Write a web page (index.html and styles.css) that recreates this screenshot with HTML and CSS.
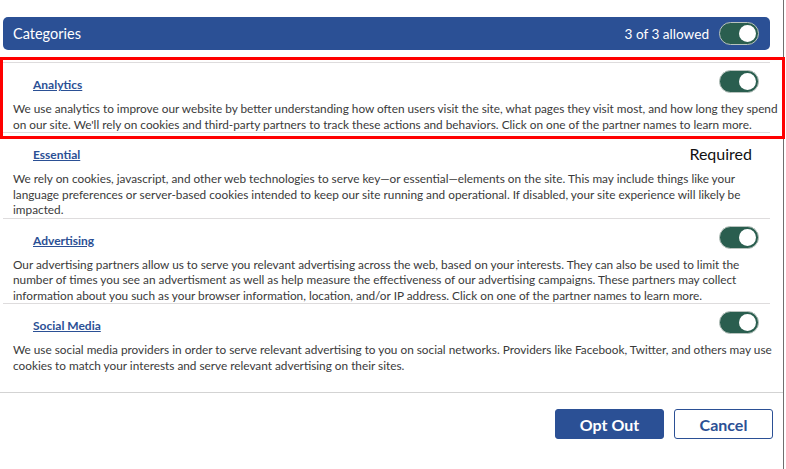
FILE: index.html
```html
<!DOCTYPE html>
<html lang="en">
<head>
    <meta charset="UTF-8">
    <meta name="viewport" content="width=device-width, initial-scale=1.0">
    <title>Cookie Preferences</title>
    <link rel="stylesheet" href="styles.css">
</head>
<body>
    <div class="modal">
        <div class="content">

            <div class="cat-header">
                <span class="cat-title">Categories</span>
                <div class="cat-right">
                    <span>3 of 3 allowed</span>
                    <span class="toggle"><span class="knob"></span></span>
                </div>
            </div>

            <div class="list">
                <div class="item is-focused">
                    <div class="item-head">
                        <a href="#" class="item-title">Analytics</a>
                        <span class="toggle"><span class="knob"></span></span>
                    </div>
                    <p class="item-desc">We use analytics to improve our website by better understanding how often users visit the site, what pages they visit most, and how long they spend on our site. We'll rely on cookies and third-party partners to track these actions and behaviors. Click on one of the partner names to learn more.</p>
                </div>

                <div class="item">
                    <div class="item-head">
                        <a href="#" class="item-title">Essential</a>
                        <span class="required">Required</span>
                    </div>
                    <p class="item-desc">We rely on cookies, javascript, and other web technologies to serve key—or essential—elements on the site. This may include things like your language preferences or server-based cookies intended to keep our site running and operational. If disabled, your site experience will likely be impacted.</p>
                </div>

                <div class="item">
                    <div class="item-head">
                        <a href="#" class="item-title">Advertising</a>
                        <span class="toggle"><span class="knob"></span></span>
                    </div>
                    <p class="item-desc">Our advertising partners allow us to serve you relevant advertising across the web, based on your interests. They can also be used to limit the number of times you see an advertisment as well as help measure the effectiveness of our advertising campaigns. These partners may collect information about you such as your browser information, location, and/or IP address. Click on one of the partner names to learn more.</p>
                </div>

                <div class="item">
                    <div class="item-head">
                        <a href="#" class="item-title">Social Media</a>
                        <span class="toggle"><span class="knob"></span></span>
                    </div>
                    <p class="item-desc">We use social media providers in order to serve relevant advertising to you on social networks. Providers like Facebook, Twitter, and others may use cookies to match your interests and serve relevant advertising on their sites.</p>
                </div>
            </div>
        </div>

        <div class="footer">
            <button class="btn btn-primary">Opt Out</button>
            <button class="btn btn-secondary">Cancel</button>
        </div>
    </div>
</body>
</html>
```

FILE: styles.css
```css
body {
    margin: 0;
    font-family: Lato, "Open Sans", sans-serif;
    background-color: #fff;
    color: #3a3a3a;
}
.modal {
    width: 783px;
    height: 469px;
    border-right: 1px solid #6f6f6f;
}
.content {
    padding: 17px 13px 0 3px;
}
.cat-header {
    height: 33px;
    display: flex;
    align-items: center;
    justify-content: space-between;
    padding: 0 11px 0 10px;
    background-color: #2b5095;
    border-radius: 5px;
    color: #fff;
    font-size: 14.5px;
}
.cat-right {
    display: flex;
    align-items: center;
    gap: 10px;
    font-size: 13.6px;
}
.toggle {
    width: 36px;
    height: 21px;
    padding-right: 2px;
    border: 1px solid #b9c3be;
    border-radius: 12px;
    background-color: #2a5e4f;
    display: flex;
    align-items: center;
    justify-content: flex-end;
}
.knob {
    width: 17px;
    height: 17px;
    border-radius: 50%;
    background-color: #fff;
}
.list {
    margin-top: 12px;
    border-top: 1px solid #dedcdd;
    padding-bottom: 19px;
}
.item {
    padding: 0 11px 0 10px;
    border-bottom: 1px solid #dedcdd;
}
.item:last-child {
    border-bottom: none;
}
.is-focused {
    position: relative;
}
.is-focused::after {
    content: "";
    position: absolute;
    top: -6px;
    left: -3px;
    right: -15px;
    bottom: -7px;
    border: 3px solid #ff0000;
    pointer-events: none;
}
.item-head {
    height: 30px;
    display: flex;
    justify-content: space-between;
    align-items: flex-start;
}
.item-title {
    margin: 13px 0 0 20px;
    line-height: 18px;
    font-size: 12px;
    font-weight: bold;
    color: #2b5095;
    text-decoration: underline;
}
.item-head .toggle {
    margin-top: 7px;
}
.required {
    margin: 11px 7px 0 0;
    font-size: 16px;
    color: #111;
}
.item-desc {
    margin: 8px -22px 0 0;
    font-size: 11.8px;
    line-height: 15.5px;
    color: #3a3a3a;
}
.footer {
    border-top: 1px solid #d3d3d3;
    padding: 16px 10px 0 0;
    display: flex;
    justify-content: flex-end;
    gap: 10px;
}
.btn {
    height: 30px;
    border-radius: 3px;
    font-family: Lato, "Open Sans", sans-serif;
    font-size: 16px;
    font-weight: bold;
    cursor: pointer;
}
.btn-primary {
    width: 109px;
    background-color: #2b5095;
    border: 1px solid #2b5095;
    color: #fff;
}
.btn-secondary {
    width: 99px;
    background-color: #fff;
    border: 1px solid #2b5095;
    color: #2b5095;
}
```
